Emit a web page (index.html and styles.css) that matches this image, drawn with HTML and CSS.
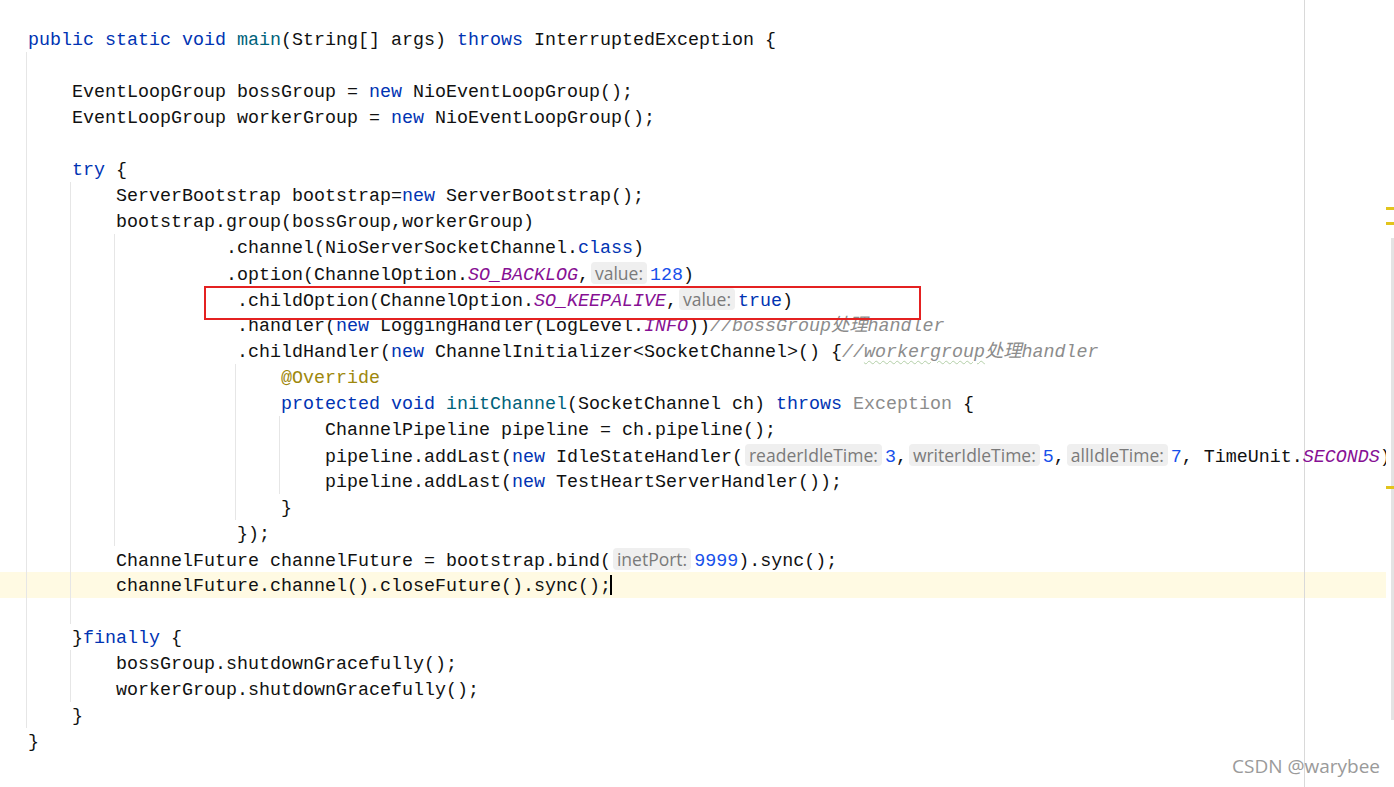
FILE: index.html
```html
<!DOCTYPE html>
<html lang="en">
<head>
    <meta charset="UTF-8">
    <meta name="viewport" content="width=device-width, initial-scale=1.0">
    <title>NettyServer.java</title>
    <link rel="stylesheet" href="styles.css">
</head>
<body>
    <div class="ide">
        <div class="editor">
            <div class="code">
                <div class="line"><span class="kw">public static void</span> <span class="fn">main</span>(String[] args) <span class="kw">throws</span> InterruptedException {</div>
                <div class="block root">
                    <div class="line"></div>
                    <div class="line">    EventLoopGroup bossGroup = <span class="kw">new</span> NioEventLoopGroup();</div>
                    <div class="line">    EventLoopGroup workerGroup = <span class="kw">new</span> NioEventLoopGroup();</div>
                    <div class="line"></div>
                    <div class="line">    <span class="kw">try</span> {</div>
                    <div class="block">
                        <div class="line">    ServerBootstrap bootstrap=<span class="kw">new</span> ServerBootstrap();</div>
                        <div class="line">    bootstrap.group(bossGroup,workerGroup)</div>
                        <div class="block">
                            <div class="line">          .channel(NioServerSocketChannel.<span class="kw">class</span>)</div>
                            <div class="line">          .option(ChannelOption.<span class="st">SO_BACKLOG</span>,<span class="hint">value:</span><span class="num">128</span>)</div>
                            <div class="line">           .childOption(ChannelOption.<span class="st">SO_KEEPALIVE</span>,<span class="hint">value:</span><span class="kw">true</span>)</div>
                            <div class="line">           .handler(<span class="kw">new</span> LoggingHandler(LogLevel.<span class="st">INFO</span>))<span class="cm">//bossGroup处理handler</span></div>
                            <div class="line">           .childHandler(<span class="kw">new</span> ChannelInitializer&lt;SocketChannel&gt;() {<span class="cm">//<span class="typo">workergroup</span>处理handler</span></div>
                            <div class="block wide">
                                <div class="line">    <span class="an">@Override</span></div>
                                <div class="line">    <span class="kw">protected void</span> <span class="fn">initChannel</span>(SocketChannel ch) <span class="kw">throws</span> <span class="dim">Exception</span> {</div>
                                <div class="block">
                                    <div class="line">    ChannelPipeline pipeline = ch.pipeline();</div>
                                    <div class="line">    pipeline.addLast(<span class="kw">new</span> IdleStateHandler(<span class="hint">readerIdleTime:</span><span class="num">3</span>,<span class="hint">writerIdleTime:</span><span class="num">5</span>,<span class="hint">allIdleTime:</span><span class="num">7</span>, TimeUnit.<span class="st">SECONDS</span>));</div>
                                    <div class="line">    pipeline.addLast(<span class="kw">new</span> TestHeartServerHandler());</div>
                                </div>
                                <div class="line">    }</div>
                            </div>
                            <div class="line">           });</div>
                        </div>
                        <div class="line">    ChannelFuture channelFuture = bootstrap.bind(<span class="hint">inetPort:</span><span class="num">9999</span>).sync();</div>
                        <div class="line current">    channelFuture.channel().closeFuture().sync();<span class="caret"></span></div>
                        <div class="line"></div>
                    </div>
                    <div class="line">    }<span class="kw">finally</span> {</div>
                    <div class="block">
                        <div class="line">    bossGroup.shutdownGracefully();</div>
                        <div class="line">    workerGroup.shutdownGracefully();</div>
                    </div>
                    <div class="line">    }</div>
                </div>
                <div class="line">}</div>
            </div>
            <div class="mark-box"></div>
        </div>
        <div class="scrollbar">
            <div class="thumb"></div>
            <span class="marker m1"></span>
            <span class="marker m2"></span>
            <span class="marker m3"></span>
        </div>
        <div class="watermark">CSDN @warybee</div>
    </div>
</body>
</html>
```

FILE: styles.css
```css
html {
    background-color: #fff;
}

body {
    margin: 0;
    width: 1394px;
    height: 787px;
    overflow: hidden;
}

.ide {
    display: flex;
    height: 787px;
    position: relative;
}

.editor {
    flex: 1;
    position: relative;
    overflow: hidden;
    padding: 26px 0 0 28px;
    /* right margin guide */
    background: linear-gradient(to right, transparent 1304px, #d9d9d9 1304px, #d9d9d9 1305px, transparent 1305px);
}

.code {
    font-family: "Liberation Mono", "Noto Sans CJK SC", monospace;
    font-size: 18.3333px;
    color: #111;
}

.line {
    height: 24px;
    padding-top: 2px;
    line-height: 26px;
    white-space: pre;
}

.line.current {
    position: relative;
}

.line.current::before {
    content: '';
    position: absolute;
    top: 0;
    bottom: 0;
    left: -300px;
    right: -400px;
    background-color: #fffae3;
    z-index: -1;
}

.block {
    border-left: 1px solid #e6e6e6;
    padding-left: 1px;
    margin-left: 42px;
}

.block.root {
    margin-left: -2px;
}

.block.wide {
    margin-left: 119px;
}

.kw { color: #0033b3; }
.num { color: #1750eb; }
.fn { color: #00627a; }
.st { color: #871094; font-style: italic; }
.an { color: #9e880d; }
.dim { color: #8c8c8c; }

.cm {
    color: #8c8c8c;
    font-style: italic;
}

.typo {
    text-decoration: underline wavy #b3cfa8;
    text-decoration-thickness: 1px;
    text-underline-offset: 3px;
}

.hint {
    display: inline-block;
    height: 22px;
    line-height: 22px;
    vertical-align: 0;
    margin: 0 3px 0 2px;
    padding: 0 4px;
    border-radius: 4px;
    background-color: #efefef;
    color: #7a7a7a;
    font-family: "Open Sans", "Noto Sans", sans-serif;
    font-size: 17.5px;
    font-style: normal;
}

.caret {
    display: inline-block;
    width: 2px;
    height: 20px;
    margin-left: -1px;
    vertical-align: -4px;
    background-color: #000;
}

.mark-box {
    position: absolute;
    left: 204px;
    top: 286px;
    width: 717px;
    height: 34px;
    box-sizing: border-box;
    border: 2px solid #e42121;
}

.scrollbar {
    width: 8px;
    position: relative;
}

.thumb {
    margin: 238px 0 0 5px;
    width: 3px;
    height: 482px;
    background-color: #e3e3e3;
}

.marker {
    position: absolute;
    left: 0;
    width: 8px;
    height: 3px;
    background-color: #e2c41c;
}

.m1 { top: 207px; }
.m2 { top: 222px; }
.m3 { top: 486px; }

.watermark {
    position: absolute;
    right: 14px;
    bottom: 11px;
    font-family: "Open Sans", "Noto Sans", sans-serif;
    font-size: 19px;
    line-height: 1;
    color: #9a9a9a;
}
```
